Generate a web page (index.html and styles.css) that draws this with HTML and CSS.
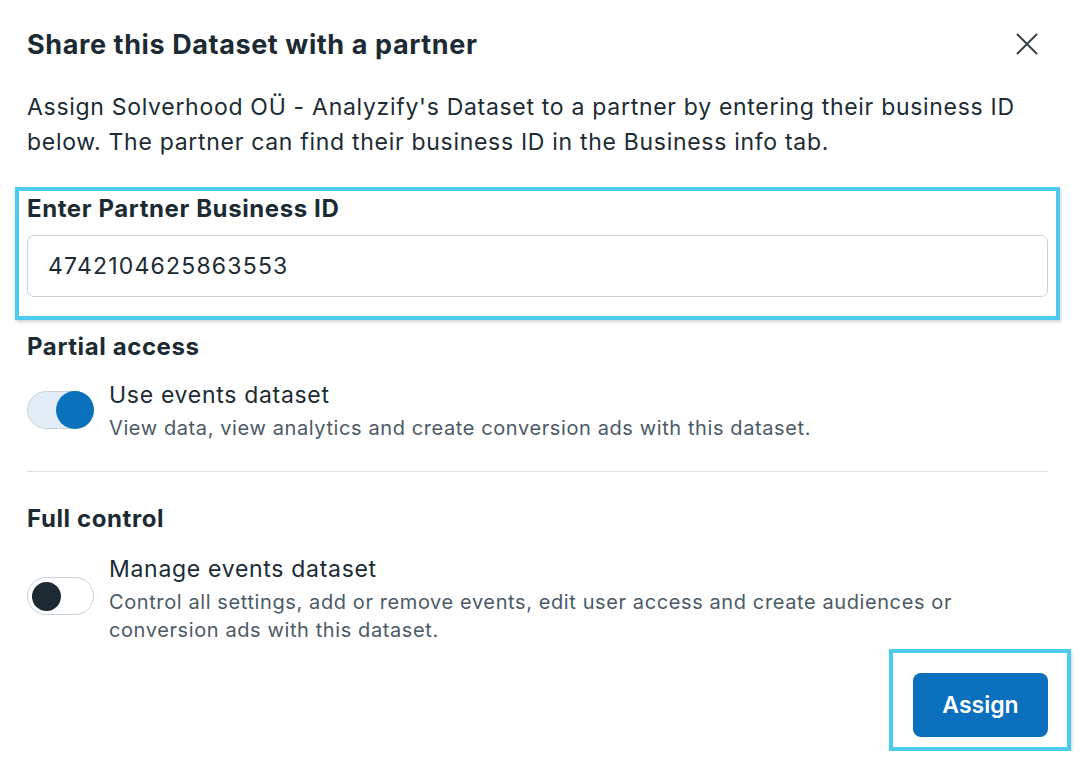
FILE: index.html
```html
<!DOCTYPE html>
<html lang="en">
<head>
<meta charset="utf-8">
<title>Share this Dataset with a partner</title>
<link rel="stylesheet" href="styles.css">
</head>
<body>
<div class="dialog">
  <header class="header">
    <h1 class="title">Share this Dataset with a partner</h1>
    <button class="close" aria-label="Close">
      <svg width="22" height="22" viewBox="0 0 22 22"><path d="M1 1 L21 21 M21 1 L1 21" stroke="#3a4148" stroke-width="2" fill="none"/></svg>
    </button>
  </header>
  <p class="desc">Assign Solverhood OÜ - Analyzify's Dataset to a partner by entering their business ID below. The partner can find their business ID in the Business info tab.</p>

  <div class="highlight field-box">
    <label class="section-label">Enter Partner Business ID</label>
    <div class="input">4742104625863553</div>
  </div>

  <h2 class="section-label partial">Partial access</h2>
  <div class="option">
    <span class="toggle on"><span class="thumb"></span></span>
    <div class="option-text">
      <div class="option-title">Use events dataset</div>
      <div class="option-sub">View data, view analytics and create conversion ads with this dataset.</div>
    </div>
  </div>

  <hr class="divider">

  <h2 class="section-label full">Full control</h2>
  <div class="option option2">
    <span class="toggle off"><span class="thumb"></span></span>
    <div class="option-text">
      <div class="option-title">Manage events dataset</div>
      <div class="option-sub">Control all settings, add or remove events, edit user access and create audiences or conversion ads with this dataset.</div>
    </div>
  </div>

  <div class="footer">
    <div class="highlight btn-box">
      <button class="assign">Assign</button>
    </div>
  </div>
</div>
</body>
</html>
```
FILE: styles.css
```css
* { box-sizing: border-box; }
html, body { margin: 0; padding: 0; background: #fff; }
body {
  font-family: "Inter", "Liberation Sans", sans-serif;
  color: #1c2b33;
}
.dialog {
  width: 1083px;
  padding: 0 35px 0 27px;
}
.header {
  display: flex;
  align-items: center;
  justify-content: space-between;
  height: 56px;
  margin-top: 16px;
}
.title {
  margin: 0;
  font-size: 27px;
  font-weight: 700;
  letter-spacing: 0.6px;
}
.close {
  border: 0;
  background: none;
  padding: 0;
  margin-right: 10px;
  width: 22px;
  height: 22px;
  display: flex;
}
.desc {
  margin: 18px 0 0;
  font-size: 23px;
  line-height: 35px;
  font-weight: 400;
  letter-spacing: 0.7px;
  color: #1c2b33;
}
.highlight {
  border: 4px solid #4ccbef;
  box-shadow: 1px 2px 3px rgba(0,0,0,0.18);
}
.field-box {
  margin: 27px -12px 0 -12px;
  padding: 3px 8px 19px 8px;
}
.section-label {
  display: block;
  margin: 0;
  font-size: 24px;
  line-height: 30px;
  font-weight: 700;
  letter-spacing: 0.6px;
  color: #1c2b33;
}
.input {
  margin-top: 11px;
  height: 62px;
  border: 1px solid #ccd0d4;
  border-radius: 7px;
  padding: 0 20px;
  display: flex;
  align-items: center;
  font-size: 23px;
  letter-spacing: 1.2px;
  color: #1c2b33;
}
.partial { margin-top: 12px; }
.option {
  display: flex;
  align-items: center;
  gap: 15px;
  margin-top: 18px;
}
.option-title {
  font-size: 23px;
  line-height: 30px;
  letter-spacing: 0.7px;
  color: #1c2b33;
}
.option-sub {
  font-size: 20px;
  line-height: 28px;
  letter-spacing: 0.6px;
  color: #4b5a66;
  margin-top: 4px;
}
.toggle {
  flex: none;
  width: 67px;
  height: 38px;
  border-radius: 19px;
  border: 1px solid #cbd2d9;
  display: flex;
  align-items: center;
}
.toggle.on {
  background: #e2edf7;
  justify-content: flex-end;
  margin-bottom: 2px;
}
.toggle.on .thumb {
  width: 38px;
  height: 38px;
  margin-right: -1px;
  border-radius: 50%;
  background: #0a71bd;
}
.toggle.off {
  background: #fff;
  justify-content: flex-start;
  padding-left: 4px;
  margin-bottom: 6px;
}
.toggle.off .thumb {
  width: 29px;
  height: 29px;
  border-radius: 50%;
  background: #1c2b33;
}
.divider {
  border: 0;
  border-top: 1px solid #dcdfe2;
  margin: 29px 0 0;
}
.full { margin-top: 32px; }
.option2 { margin-top: 20px; }
.footer {
  display: flex;
  justify-content: flex-end;
  margin-top: 5px;
  margin-right: -23px;
}
.btn-box {
  padding: 20px 19px 10px 20px;
}
.assign {
  width: 135px;
  height: 64px;
  border: 0;
  border-radius: 8px;
  background: #0a6fbc;
  color: #fff;
  font-family: "Inter", "Liberation Sans", sans-serif;
  font-size: 23px;
  font-weight: 600;
}
```
